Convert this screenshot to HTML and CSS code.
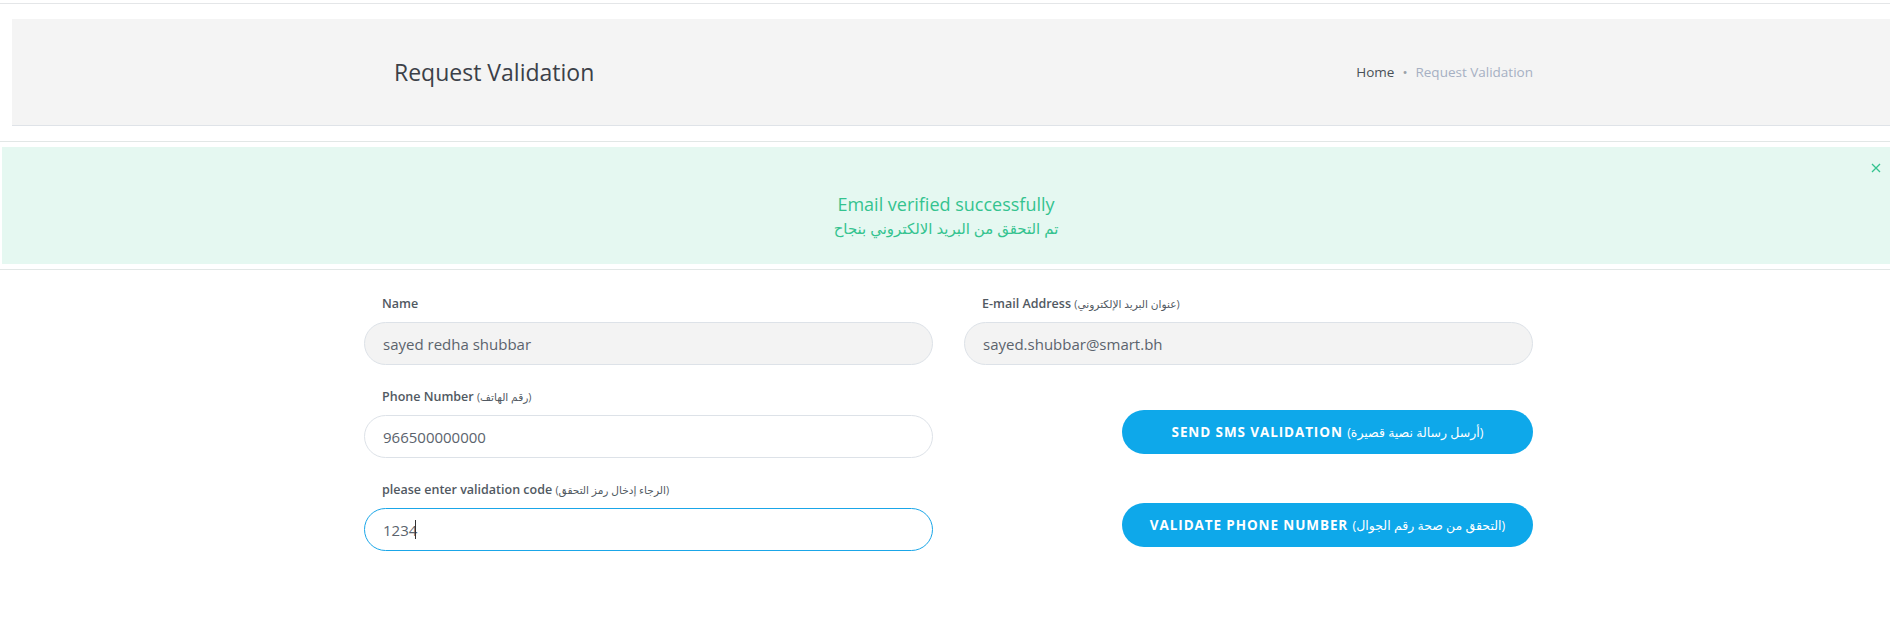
FILE: index.html
```html
<!DOCTYPE html>
<html lang="en">
<head>
    <meta charset="UTF-8">
    <meta name="viewport" content="width=device-width, initial-scale=1.0">
    <title>Request Validation</title>
    <link rel="stylesheet" href="styles.css">
</head>
<body>
    <hr class="rule rule-top">

    <section class="page-title">
        <div class="page-title-inner">
            <h1>Request Validation</h1>
            <ol class="crumbs">
                <li><a href="#">Home</a></li>
                <li class="active">Request Validation</li>
            </ol>
        </div>
    </section>

    <hr class="rule">

    <div class="alert">
        <button type="button" class="alert-close" aria-label="Close">
            <svg width="10" height="10" viewBox="0 0 10 10"><path d="M1 1L9 9M9 1L1 9" stroke="currentColor" stroke-width="1.3" fill="none"/></svg>
        </button>
        <p>Email verified successfully</p>
        <p class="alert-ar" dir="rtl">تم التحقق من البريد الالكتروني بنجاح</p>
    </div>

    <hr class="rule">

    <form class="validate-form">
        <div class="field">
            <label>Name</label>
            <input class="input" type="text" value="sayed redha shubbar" disabled>
        </div>
        <div class="field">
            <label>E-mail Address <span class="ar">(عنوان البريد الإلكتروني)</span></label>
            <input class="input" type="text" value="sayed.shubbar@smart.bh" disabled>
        </div>

        <div class="field">
            <label>Phone Number <span class="ar">(رقم الهاتف)</span></label>
            <input class="input" type="text" value="966500000000">
        </div>
        <div class="action">
            <button type="button" class="btn">SEND SMS VALIDATION <span class="ar">(أرسل رسالة نصية قصيرة)</span></button>
        </div>

        <div class="field">
            <label>please enter validation code <span class="ar">(الرجاء إدخال رمز التحقق)</span></label>
            <div class="input-wrap">
                <input class="input is-focus" type="text" value="1234">
                <span class="caret"></span>
            </div>
        </div>
        <div class="action">
            <button type="button" class="btn">VALIDATE PHONE NUMBER <span class="ar">(التحقق من صحة رقم الجوال)</span></button>
        </div>
    </form>
</body>
</html>
```

FILE: styles.css
```css
body {
    margin: 0;
    font-family: 'Open Sans', 'DejaVu Sans', sans-serif;
    color: #495057;
    background: #fff;
    overflow: hidden;
}
.rule {
    border: 0;
    border-top: 1px solid #e2e7e6;
    margin: 15px 0 0;
}
.rule-top {
    margin-top: 3px;
    border-top-color: #e4e6e8;
}

/* page title */
.page-title {
    margin: 15px 0 0 12px;
    height: 106px;
    background-color: #f4f4f4;
    border-bottom: 1px solid #dfe3e8;
    display: flex;
    align-items: center;
}
.page-title-inner {
    margin-left: 382px;
    width: 1139px;
    display: flex;
    justify-content: space-between;
    align-items: center;
}
.page-title h1 {
    margin: 0;
    font-size: 23px;
    font-weight: 400;
    color: #3b4048;
}
.crumbs {
    list-style: none;
    margin: 0;
    padding: 0;
    display: flex;
    font-size: 13.5px;
}
.crumbs a {
    color: #495057;
    text-decoration: none;
}
.crumbs li + li::before {
    content: "•";
    color: #9aa0a8;
    padding: 0 8px;
}
.crumbs .active {
    color: #a6b0c3;
}

/* alert */
.alert {
    position: relative;
    margin: 5px 0 0 2px;
    height: 117px;
    box-sizing: border-box;
    padding-top: 45px;
    background-color: #e5f8f1;
    color: #34c38f;
    text-align: center;
    font-size: 18px;
    line-height: 24px;
}
.alert p {
    margin: 0;
}
.alert .alert-ar {
    font-size: 15px;
}
.alert-close {
    position: absolute;
    top: 16px;
    right: 9px;
    padding: 0;
    border: 0;
    background: none;
    color: #34c38f;
    line-height: 0;
}
.alert + .rule {
    margin-top: 5px;
}

/* form */
.validate-form {
    margin-left: 364px;
    width: 1169px;
    padding-top: 24px;
    display: grid;
    grid-template-columns: 1fr 1fr;
    column-gap: 31px;
    row-gap: 22px;
}
.field label {
    display: block;
    margin: 0 0 8px 18px;
    font-size: 12.5px;
    font-weight: 600;
    line-height: 20px;
    color: #515962;
}
.ar {
    font-weight: 400;
    font-size: 0.85em;
}
.input {
    display: block;
    width: 100%;
    height: 43px;
    box-sizing: border-box;
    padding: 0 18px;
    border: 1px solid #dde2e8;
    border-radius: 22px;
    background: #fff;
    font-family: inherit;
    font-size: 15px;
    color: #5b636d;
    outline: none;
}
.input:disabled {
    background-color: #f3f3f3;
}
.input.is-focus {
    border-color: #1aa6e8;
}
.input-wrap {
    position: relative;
}
.caret {
    position: absolute;
    left: 51px;
    top: 12px;
    width: 1px;
    height: 19px;
    background: #333;
}
.action {
    display: flex;
    justify-content: flex-end;
    align-items: flex-end;
    padding-bottom: 4px;
}
.btn {
    width: 411px;
    height: 44px;
    border: 0;
    border-radius: 22px;
    background-color: #0ea8ea;
    color: #fff;
    font-family: inherit;
    font-size: 13.5px;
    font-weight: 700;
    letter-spacing: 0.9px;
    cursor: pointer;
}
.btn .ar {
    letter-spacing: 0;
    font-size: 12.5px;
}
```
